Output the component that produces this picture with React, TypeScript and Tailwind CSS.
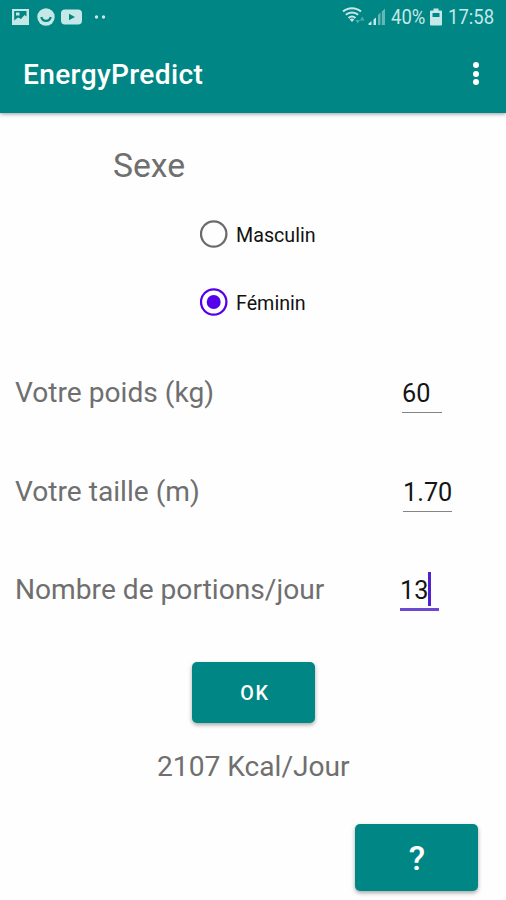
import { useState } from "react";

type RadioOptionProps = {
  label: string;
  selected: boolean;
  onSelect: () => void;
};

type FieldRowProps = {
  label: string;
  value: string;
  labelClass: string;
  inputClass: string;
  focused?: boolean;
};

const StatusBar = () => (
  <div className="flex h-[34px] items-center text-[#c5e8e7]">
    <svg className="ml-3 h-[18px] w-[17px]" viewBox="0 0 17 18">
      <path
        fill="currentColor"
        fillRule="evenodd"
        d="M0 1h17v16H0zM2.200 3v9.500l3.800-3 3 1.500 3.500-4 2 1.500V3zM4 4.500h3.500v3H4z"
      />
    </svg>
    <svg className="ml-2 h-[18px] w-[18px]" viewBox="0 0 18 18">
      <circle cx="9" cy="9" r="8.700" fill="currentColor" />
      <path d="M4.300 9a4.800 4.800 0 0 0 9.400 0" fill="none" stroke="#008684" strokeWidth="2.200" />
    </svg>
    <svg className="ml-[6px] h-[16px] w-[21px]" viewBox="0 0 21 16">
      <rect y="0.500" width="21" height="15" rx="4" fill="currentColor" />
      <path d="M8 4.700v6.600l6-3.300z" fill="#008684" />
    </svg>
    <svg className="ml-3 h-1 w-3" viewBox="0 0 12 4">
      <circle cx="2.500" cy="2" r="1.700" fill="currentColor" />
      <circle cx="9.500" cy="2" r="1.700" fill="currentColor" />
    </svg>
    <svg className="-mt-1 ml-auto h-[18px] w-[23px]" viewBox="0 0 23 18">
      <g fill="none" stroke="currentColor" strokeWidth="2">
        <path d="M1 5.600a13.500 13.500 0 0 1 18 0" />
        <path d="M3.800 8.800a9.300 9.300 0 0 1 12.400 0" />
        <path d="M6.500 11.900a5.300 5.300 0 0 1 7 0" />
      </g>
      <path d="M7.700 13.500a3.500 3.500 0 0 1 4.600 0L10 16z" fill="currentColor" />
      <path d="M13.500 14h4.500l-2.200 3.500zM18 14.500l2.200-4 2.300 4z" fill="currentColor" opacity="0.400" />
    </svg>
    <svg className="ml-[3px] h-[18px] w-[18px]" viewBox="0 0 18 18">
      <path d="M0.500 15.500l3-2.500v4h-3zM5.500 11.500l2.500-2v7.500H5.500z" fill="currentColor" />
      <path d="M10 7l2.500-2.500V17H10zM13.800 3.500L17 0.500V17h-3.200z" fill="currentColor" opacity="0.500" />
    </svg>
    <span className="mt-px ml-[5px] w-[34px] origin-left scale-x-[0.88] text-[21px] leading-none whitespace-nowrap">
      40%
    </span>
    <svg className="ml-[5px] h-[18px] w-3" viewBox="0 0 12 18">
      <path
        fill="currentColor"
        fillRule="evenodd"
        d="M3.500 0.500h5v2H11a1 1 0 0 1 1 1V16.500a1 1 0 0 1-1 1H1a1 1 0 0 1-1-1V3.500a1 1 0 0 1 1-1h2.500zM2.500 5v4h7V5z"
      />
    </svg>
    <span className="mt-px mr-3 ml-[6px] w-[46px] origin-left scale-x-[0.88] text-[21px] leading-none whitespace-nowrap">
      17:58
    </span>
  </div>
);

const RadioOption = ({ label, selected, onSelect }: RadioOptionProps) => (
  <button className="flex h-[68px] items-center" onClick={onSelect}>
    <svg
      className={selected ? "h-7 w-7 text-[#5500e8]" : "h-7 w-7 text-[#6b6b6b]"}
      viewBox="0 0 28 28"
    >
      <circle cx="13.700" cy="14" r="12.700" fill="none" stroke="currentColor" strokeWidth="2.300" />
      {selected && <circle cx="13.700" cy="14" r="7" fill="currentColor" />}
    </svg>
    <span className="mt-[3px] ml-2 text-[19.7px] text-[#111]">{label}</span>
  </button>
);

const FieldRow = ({ label, value, labelClass, inputClass, focused }: FieldRowProps) => (
  <div className="flex h-[98.5px] items-start">
    <span className={`${labelClass} pt-px text-[28.15px] leading-[34px] whitespace-nowrap text-[#6f6f6f]`}>
      {label}
    </span>
    <div
      className={`${inputClass} flex items-start text-[25.3px] text-[#151515] ${
        focused
          ? "h-[39px] border-b-3 border-[#6d48d0] leading-[38px]"
          : "h-[38px] border-b-[1.5px] border-[#858585] leading-[38px]"
      }`}
    >
      {value}
      {focused && <span className="h-[34px] w-[2.500px] bg-[#5022cc]" />}
    </div>
  </div>
);

export default function App() {
  const [sexe, setSexe] = useState("Féminin");

  return (
    <div className="flex h-[900px] w-[506px] flex-col overflow-hidden bg-[#fefefe] font-['Roboto',sans-serif]">
      <header className="h-[113px] shrink-0 bg-[#008684] shadow-[0_1px_4px_rgba(0,0,0,0.4)]">
        <StatusBar />
        <div className="flex h-[79px] items-center justify-between pr-[27px] pl-[23px]">
          <h1 className="pt-1 text-[28.1px] font-medium tracking-[0.35px] text-white">EnergyPredict</h1>
          <div className="flex flex-col gap-[2.500px]">
            <span className="h-1.5 w-1.5 rounded-full bg-white" />
            <span className="h-1.5 w-1.5 rounded-full bg-white" />
            <span className="h-1.5 w-1.5 rounded-full bg-white" />
          </div>
        </div>
      </header>

      <main className="flex flex-1 flex-col">
        <h2 className="mt-[33px] ml-[113px] text-[33.7px] leading-10 text-[#6f6f6f]">Sexe</h2>
        <div className="mt-[14px] ml-[200px] flex flex-col items-start">
          {["Masculin", "Féminin"].map((option) => (
            <RadioOption
              key={option}
              label={option}
              selected={sexe === option}
              onSelect={() => setSexe(option)}
            />
          ))}
        </div>

        <div className="mt-[39px] ml-[15px]">
          <FieldRow label="Votre poids (kg)" value="60" labelClass="w-[387px]" inputClass="w-[40px]" />
          <FieldRow label="Votre taille (m)" value="1.70" labelClass="w-[388px]" inputClass="w-[49px]" />
          <FieldRow
            label="Nombre de portions/jour"
            value="13"
            labelClass="w-[385px]"
            inputClass="w-[39px]"
            focused
          />
        </div>

        <button className="-mt-[9px] ml-[192px] h-[61px] w-[123px] rounded-[5px] bg-[#008684] pt-[3px] pl-[3px] text-[19.7px] font-medium tracking-[1.75px] text-white shadow-[0_2px_4px_rgba(0,0,0,0.35)]">
          OK
        </button>
        <p className="mt-[27px] ml-[157px] text-[28.15px] leading-[34px] text-[#6f6f6f]">2107 Kcal/Jour</p>
        <button className="mt-10 ml-[355px] h-[67px] w-[123px] rounded-[5px] bg-[#008684] pt-[5px] pl-px text-[33.7px] font-medium text-white shadow-[0_2px_4px_rgba(0,0,0,0.35)]">
          ?
        </button>
      </main>
    </div>
  );
}
